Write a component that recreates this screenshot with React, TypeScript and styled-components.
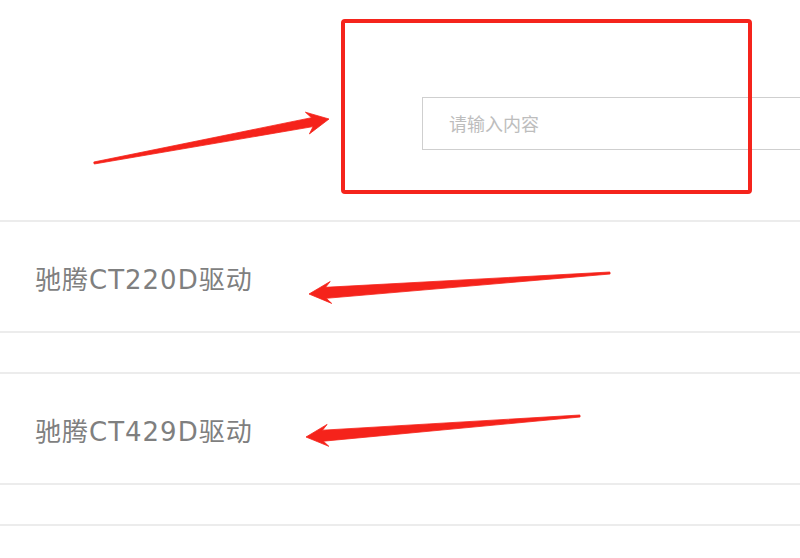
import React from "react";
import styled, { createGlobalStyle } from "styled-components";

const GlobalStyle = createGlobalStyle`
  html, body {
    margin: 0;
    padding: 0;
    background: #ffffff;
    overflow: hidden;
  }
  body {
    font-family: "Noto Sans CJK SC", "Noto Sans", sans-serif;
  }
`;

const Page = styled.div`
  position: relative;
  width: 800px;
  height: 558px;
  overflow: hidden;
  background: #fff;
`;

const SearchBar = styled.div`
  box-sizing: border-box;
  height: 220px;
  padding: 97px 0 0 422px;
  display: flex;
  align-items: flex-start;
`;

const SearchInput = styled.input`
  box-sizing: border-box;
  flex: none;
  width: 420px;
  height: 53px;
  border: 1px solid #cfcfcf;
  border-radius: 0;
  padding: 0 0 2px 26px;
  font-family: "Noto Sans CJK SC", sans-serif;
  font-size: 18px;
  color: #555;
  outline: none;
  background: #fff;
  &::placeholder {
    color: #bdbdbd;
  }
`;

const List = styled.div`
  display: flex;
  flex-direction: column;
  gap: 39px;
`;

const Item = styled.div`
  box-sizing: border-box;
  height: 113px;
  border-top: 2px solid #ececec;
  border-bottom: 2px solid #ececec;
  display: flex;
  align-items: center;
  padding: 2px 0 0 35px;
`;

const ItemTitle = styled.span`
  font-family: "DejaVu Sans", "Noto Sans CJK SC", sans-serif;
  font-size: 26px;
  color: #7f7f7f;
  letter-spacing: 1px;
`;

const HighlightBox = styled.div`
  position: absolute;
  left: 341px;
  top: 19px;
  width: 411px;
  height: 175px;
  box-sizing: border-box;
  border: 4px solid #f5241c;
  border-radius: 4px;
  pointer-events: none;
`;

const Overlay = styled.svg`
  position: absolute;
  left: 0;
  top: 0;
  width: 800px;
  height: 558px;
  pointer-events: none;
`;

type Pt = [number, number];

function arrowPoints(tail: Pt, tip: Pt, head = 20, wing = 11, neck = 5, tailW = 1): string {
  const dx = tip[0] - tail[0];
  const dy = tip[1] - tail[1];
  const len = Math.hypot(dx, dy);
  const ux = dx / len;
  const uy = dy / len;
  const px = -uy;
  const py = ux;
  const neckC: Pt = [tip[0] - ux * (head - 3), tip[1] - uy * (head - 3)];
  const wingC: Pt = [tip[0] - ux * (head + 2), tip[1] - uy * (head + 2)];
  const pts: Pt[] = [
    [tail[0] + px * tailW, tail[1] + py * tailW],
    [neckC[0] + px * neck, neckC[1] + py * neck],
    [wingC[0] + px * wing, wingC[1] + py * wing],
    tip,
    [wingC[0] - px * wing, wingC[1] - py * wing],
    [neckC[0] - px * neck, neckC[1] - py * neck],
    [tail[0] - px * tailW, tail[1] - py * tailW],
  ];
  return pts.map((p) => `${p[0].toFixed(1)},${p[1].toFixed(1)}`).join(" ");
}

const arrows: { tail: Pt; tip: Pt; head: number; wing: number; neck: number }[] = [
  { tail: [94, 163], tip: [329, 119], head: 20, wing: 11, neck: 4.5 },
  { tail: [610, 273], tip: [309, 294], head: 20, wing: 11, neck: 5.5 },
  { tail: [580, 416], tip: [306, 437], head: 20, wing: 11, neck: 5.5 },
];

const items = ["驰腾CT220D驱动", "驰腾CT429D驱动", ""];

export default function App() {
  return (
    <>
      <GlobalStyle />
      <Page>
        <SearchBar>
          <SearchInput placeholder="请输入内容" />
        </SearchBar>
        <List>
          {items.map((t, i) => (
            <Item key={i}>{t && <ItemTitle>{t}</ItemTitle>}</Item>
          ))}
        </List>
        <HighlightBox />
        <Overlay viewBox="0 0 800 558">
          {arrows.map((a, i) => (
            <polygon
              key={i}
              points={arrowPoints(a.tail, a.tip, a.head, a.wing, a.neck)}
              fill="#f5231b"
              stroke="#f5231b"
              strokeWidth={0.8}
              strokeLinejoin="round"
            />
          ))}
        </Overlay>
      </Page>
    </>
  );
}
